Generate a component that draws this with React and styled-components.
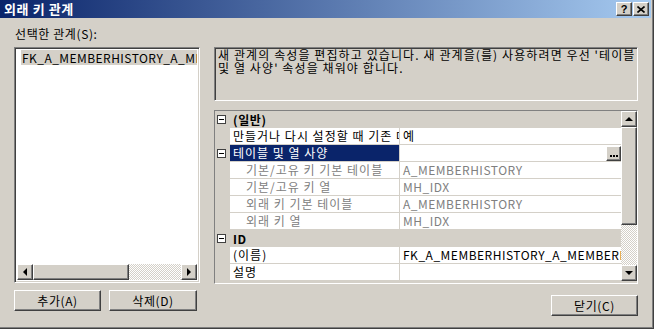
import React from 'react'
import styled, { createGlobalStyle, css } from 'styled-components'

const GlobalStyle = createGlobalStyle`
  body {
    margin: 0;
    font-family: "Noto Sans CJK KR", "Noto Sans", sans-serif;
    font-size: 12px;
    letter-spacing: 0.6px;
    color: #000;
  }
`

const face = '#d4d0c8'

const raised = css`
  border-style: solid;
  border-width: 1px;
  border-color: #fff #404040 #404040 #fff;
  box-shadow: inset -1px -1px #808080;
  background: ${face};
  box-sizing: border-box;
`

const sunken = css`
  border-style: solid;
  border-width: 1px;
  border-color: #808080 #fff #fff #808080;
  box-shadow: inset 1px 1px #404040, inset -1px -1px ${face};
  box-sizing: border-box;
`

const Window = styled.div`
  width: 654px;
  height: 329px;
  background: ${face};
  display: flex;
  flex-direction: column;
  box-shadow: inset -1px -1px #404040, inset -2px -2px #808080;
  overflow: hidden;
`

const TitleBar = styled.div`
  height: 18px;
  margin-right: 3px;
  padding: 0 2px 0 4px;
  display: flex;
  align-items: center;
  background: linear-gradient(to right, #0a246a, #a6caf0);
`

const Title = styled.div`
  flex: 1;
  color: #fff;
  font-weight: bold;
  font-size: 13px;
  letter-spacing: 0.6px;
  line-height: 18px;
`

const CaptionButtons = styled.div`
  display: flex;
  gap: 1px;
`

const CaptionButton = styled.div`
  ${raised}
  width: 16px;
  height: 14px;
  display: flex;
  align-items: center;
  justify-content: center;
  font-family: "Liberation Sans", sans-serif;
  font-weight: bold;
  font-size: 11px;
  letter-spacing: 0;
  line-height: 1;
`

const Body = styled.div`
  display: flex;
  gap: 14px;
  padding: 9px 0 0 14px;
`

const Column = styled.div`
  width: ${p => p.$width}px;
  display: flex;
  flex-direction: column;
`

const Label = styled.div`
  height: 14px;
  line-height: 14px;
  margin-left: 1px;
  margin-bottom: 6px;
`

const ListBox = styled.div`
  ${sunken}
  height: 236px;
  background: #fff;
  padding: 2px;
  display: flex;
  flex-direction: column;
`

const ListItem = styled.div`
  height: 15px;
  line-height: 15px;
  margin-left: 4px;
  padding-left: 1px;
  letter-spacing: 0.45px;
  background: ${face};
  white-space: nowrap;
  overflow: hidden;
`

const HScroll = styled.div`
  margin-top: auto;
  height: 16px;
  display: flex;
`

const ArrowButton = styled.div`
  ${raised}
  width: 16px;
  height: 16px;
  flex: none;
  display: flex;
  align-items: center;
  justify-content: center;
`

const Thumb = styled.div`
  ${raised}
  flex: none;
  ${p => p.$vertical ? `height: ${p.$size}px;` : `width: ${p.$size}px;`}
`

const Track = styled.div`
  flex: 1;
  background: repeating-conic-gradient(#fff 0 25%, ${face} 0 50%) 0 0 / 2px 2px;
`

const ButtonRow = styled.div`
  display: flex;
  gap: 8px;
  margin-top: ${p => p.$top}px;
  justify-content: ${p => p.$end ? 'flex-end' : 'flex-start'};
`

const PushButton = styled.div`
  ${raised}
  width: ${p => p.$width}px;
  height: 21px;
  display: flex;
  align-items: center;
  justify-content: center;
  line-height: 1;
`

const Description = styled.div`
  ${sunken}
  margin-top: 20px;
  height: 54px;
  padding: 1px 3px;
  line-height: 12.5px;
  letter-spacing: 1.1px;
`

const DescLine = styled.div`
  white-space: nowrap;
  overflow: hidden;
`

const Grid = styled.div`
  margin-top: 9px;
  height: 174px;
  border: 1px solid;
  border-color: #808080 #fff #fff #808080;
  box-sizing: border-box;
  display: flex;
  background: ${face};
`

const Rows = styled.div`
  flex: 1;
  display: flex;
  flex-direction: column;
`

const Row = styled.div`
  display: grid;
  grid-template-columns: 15px 169px 1px 1fr;
  height: 17px;
`

const Gutter = styled.div`
  display: flex;
  align-items: center;
  padding-left: 2px;
`

const ExpandBox = styled.div`
  width: 9px;
  height: 9px;
  box-sizing: border-box;
  border: 1px solid #404040;
  background: #fff;
  display: flex;
  align-items: center;
  justify-content: center;
  &::after {
    content: '';
    width: 5px;
    height: 1px;
    background: #000;
  }
`

const CategoryLabel = styled.div`
  grid-column: 2 / 5;
  font-weight: bold;
  line-height: 17px;
  padding-left: 3px;
`

const Cell = styled.div`
  background: ${p => p.$selected ? '#0a246a' : '#fff'};
  color: ${p => p.$selected ? '#fff' : p.$dim ? '#808080' : '#000'};
  border-bottom: 1px solid ${face};
  line-height: 16px;
  padding-left: ${p => p.$indent ? 16 : 3}px;
  letter-spacing: ${p => p.$value ? 0.5 : 1}px;
  white-space: nowrap;
  overflow: hidden;
  display: flex;
  align-items: center;
  position: relative;
`

const Separator = styled.div`
  background: ${face};
`

const DotsButton = styled.div`
  ${raised}
  position: absolute;
  right: 0;
  top: 1px;
  width: 15px;
  height: 15px;
  display: flex;
  justify-content: center;
  align-items: flex-end;
  padding-bottom: 3px;
`

const VScroll = styled.div`
  width: 16px;
  display: flex;
  flex-direction: column;
  padding-bottom: 2px;
`

const Arrow = ({ dir }) => {
  const pts = {
    left: '5,0 1,4 5,8',
    right: '1,0 5,4 1,8',
    up: '0,5 4,1 8,5',
    down: '0,1 4,5 8,1'
  }[dir]
  const wide = dir === 'up' || dir === 'down'
  return (
    <svg width={wide ? 8 : 6} height={wide ? 6 : 8} viewBox={wide ? '0 0 8 6' : '0 0 6 8'}>
      <polygon points={pts} fill='#000' />
    </svg>
  )
}

const Dots = () => (
  <svg width='8' height='2' viewBox='0 0 8 2'>
    <rect x='0' y='0' width='2' height='2' fill='#000' />
    <rect x='3' y='0' width='2' height='2' fill='#000' />
    <rect x='6' y='0' width='2' height='2' fill='#000' />
  </svg>
)

const rows = [
  { kind: 'cat', name: '(일반)' },
  { kind: 'prop', name: '만들거나 다시 설정할 때 기존 데이터 검사', value: '예' },
  { kind: 'prop', name: '테이블 및 열 사양', value: '', expand: true, selected: true, dots: true },
  { kind: 'prop', name: '기본/고유 키 기본 테이블', value: 'A_MEMBERHISTORY', dim: true },
  { kind: 'prop', name: '기본/고유 키 열', value: 'MH_IDX', dim: true },
  { kind: 'prop', name: '외래 키 기본 테이블', value: 'A_MEMBERHISTORY', dim: true },
  { kind: 'prop', name: '외래 키 열', value: 'MH_IDX', dim: true },
  { kind: 'cat', name: 'ID' },
  { kind: 'prop', name: '(이름)', value: 'FK_A_MEMBERHISTORY_A_MEMBERHISTORY' },
  { kind: 'prop', name: '설명', value: '' }
]

const PropertyRow = ({ row }) => {
  if (row.kind === 'cat') {
    return (
      <Row>
        <Gutter><ExpandBox /></Gutter>
        <CategoryLabel>{row.name}</CategoryLabel>
      </Row>
    )
  }
  return (
    <Row>
      <Gutter>{row.expand && <ExpandBox />}</Gutter>
      <Cell $selected={row.selected} $dim={row.dim} $indent={row.dim}>{row.name}</Cell>
      <Separator />
      <Cell $value $dim={row.dim}>
        {row.value}
        {row.dots && <DotsButton><Dots /></DotsButton>}
      </Cell>
    </Row>
  )
}

export default function App () {
  return (
    <>
      <GlobalStyle />
      <Window>
        <TitleBar>
          <Title>외래 키 관계</Title>
          <CaptionButtons>
            <CaptionButton>?</CaptionButton>
            <CaptionButton>
              <svg width='8' height='7' viewBox='0 0 8 7'>
                <path d='M0.5 0.5 L7.5 6.5 M7.5 0.5 L0.5 6.5' stroke='#000' strokeWidth='1.6' />
              </svg>
            </CaptionButton>
          </CaptionButtons>
        </TitleBar>
        <Body>
          <Column $width={186}>
            <Label>선택한 관계(S):</Label>
            <ListBox>
              <ListItem>FK_A_MEMBERHISTORY_A_MEMBERHISTORY</ListItem>
              <HScroll>
                <ArrowButton><Arrow dir='left' /></ArrowButton>
                <Thumb $size={96} />
                <Track />
                <ArrowButton><Arrow dir='right' /></ArrowButton>
              </HScroll>
            </ListBox>
            <ButtonRow $top={7}>
              <PushButton $width={87}>추가(A)</PushButton>
              <PushButton $width={88}>삭제(D)</PushButton>
            </ButtonRow>
          </Column>
          <Column $width={424}>
            <Description>
              <DescLine>새 관계의 속성을 편집하고 있습니다. 새 관계을(를) 사용하려면 우선 '테이블</DescLine>
              <DescLine>및 열 사양' 속성을 채워야 합니다.</DescLine>
            </Description>
            <Grid>
              <Rows>
                {rows.map((r, i) => <PropertyRow key={i} row={r} />)}
              </Rows>
              <VScroll>
                <ArrowButton><Arrow dir='up' /></ArrowButton>
                <Thumb $vertical $size={98} />
                <Track />
                <ArrowButton><Arrow dir='down' /></ArrowButton>
              </VScroll>
            </Grid>
            <ButtonRow $end $top={11}>
              <PushButton $width={87}>닫기(C)</PushButton>
            </ButtonRow>
          </Column>
        </Body>
      </Window>
    </>
  )
}
